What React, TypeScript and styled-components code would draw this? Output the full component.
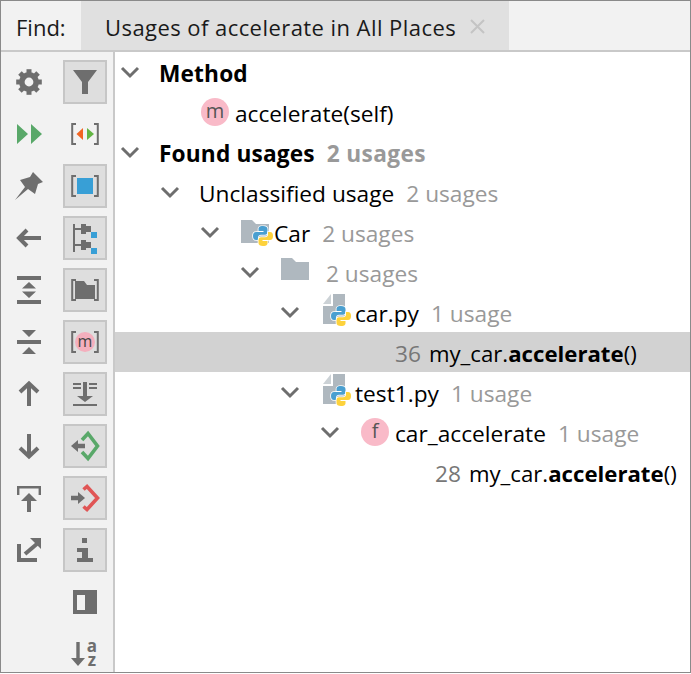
import styled, { createGlobalStyle } from "styled-components";
import type { ReactNode } from "react";

const GRAY = "#6e6e6e";

const GlobalStyle = createGlobalStyle`
  html, body {
    margin: 0;
    padding: 0;
    background: #fff;
  }
  body {
    font-family: "Open Sans", "Noto Sans", "Liberation Sans", sans-serif;
  }
`;

function Glyph({ children }: { children: ReactNode }) {
  return (
    <svg width="28" height="28" viewBox="0 0 28 28" style={{ overflow: "visible" }}>
      {children}
    </svg>
  );
}

const brackets = (
  <path d="M5 4H1.2V24H5M23 4H26.8V24H23" fill="none" stroke={GRAY} strokeWidth="2" />
);

const gearTeeth = [0, 45, 90, 135, 180, 225, 270, 315];

const leftIcons: ReactNode[] = [
  <>
    <circle cx="14" cy="14" r="7.2" fill="none" stroke={GRAY} strokeWidth="5.6" />
    {gearTeeth.map(a => (
      <rect key={a} x="11.5" y="1.2" width="5" height="5" fill={GRAY} transform={`rotate(${a} 14 14)`} />
    ))}
  </>,
  <path d="M2 4L13 14L2 24ZM16 4L27 14L16 24Z" fill="#59a869" />,
  <path d="M18 0L28 10L23 12L20 22L13 17L0 28L10 15L5 8L15 5Z" fill={GRAY} />,
  <>
    <path d="M3 14H26" stroke={GRAY} strokeWidth="4" />
    <path d="M12 6L4 14L12 22" fill="none" stroke={GRAY} strokeWidth="4" />
  </>,
  <path d="M2 0H26V4H2ZM2 24H26V28H2ZM14 6L21 12.5H7ZM14 22L21 15.5H7Z" fill={GRAY} />,
  <path d="M2 12H26V16H2ZM7 2H21L14 9ZM14 19L21 26H7Z" fill={GRAY} />,
  <>
    <path d="M14 4V26" stroke={GRAY} strokeWidth="4" />
    <path d="M5 12L14 3.5L23 12" fill="none" stroke={GRAY} strokeWidth="4" />
  </>,
  <>
    <path d="M14 2V24" stroke={GRAY} strokeWidth="4" />
    <path d="M5 16L14 24.5L23 16" fill="none" stroke={GRAY} strokeWidth="4" />
  </>,
  <>
    <path d="M3.2 11V3.2H24.8V11" fill="none" stroke={GRAY} strokeWidth="2.4" />
    <path d="M14 9L22 17H16V28H12V17H6Z" fill={GRAY} />
  </>,
  <>
    <path d="M4 8V24H22" fill="none" stroke={GRAY} strokeWidth="4" />
    <path d="M10 18L23 7" stroke={GRAY} strokeWidth="4" />
    <path d="M15 2H26V13Z" fill={GRAY} />
  </>,
];

const rightIcons: { on: boolean; icon: ReactNode }[] = [
  { on: true, icon: <path d="M2 2H26L17 14V26H11V14Z" fill={GRAY} /> },
  {
    on: false,
    icon: (
      <>
        {brackets}
        <path d="M12 8V20L5.5 14Z" fill="#f26522" />
        <path d="M16 8V20L23 14Z" fill="#62b543" />
      </>
    ),
  },
  {
    on: true,
    icon: (
      <>
        {brackets}
        <rect x="6" y="6" width="16" height="16" fill="#389fd6" />
      </>
    ),
  },
  {
    on: true,
    icon: (
      <>
        <path d="M3 0V28" stroke={GRAY} strokeWidth="2" />
        <path d="M3 5H11M3 21H11" stroke={GRAY} strokeWidth="2" />
        <path d="M10 0H15V2H20V8H15V10H10ZM10 16H15V18H20V24H15V26H10Z" fill={GRAY} />
        <rect x="20" y="8" width="6" height="6" fill="#389fd6" />
        <rect x="20" y="24" width="6" height="6" fill="#389fd6" />
      </>
    ),
  },
  {
    on: true,
    icon: (
      <>
        {brackets}
        <path d="M4 5H13L16 9H24V23H4Z" fill={GRAY} />
      </>
    ),
  },
  {
    on: true,
    icon: (
      <>
        {brackets}
        <circle cx="14" cy="14" r="10" fill="#f4afbd" />
        <text x="14" y="18.5" textAnchor="middle" fontSize="16" fontFamily="Open Sans, sans-serif" fill="#444">
          m
        </text>
      </>
    ),
  },
  {
    on: true,
    icon: (
      <path
        d="M2 3H10V5H2ZM18 3H26V5H18ZM2 7H10V9H2ZM18 7H26V9H18ZM12 2H16V16H22L14 22L6 16H12ZM2 24H26V26H2Z"
        fill={GRAY}
      />
    ),
  },
  {
    on: true,
    icon: (
      <>
        <path d="M11 8L17 1.5L26.5 14L17 26.5L11 20" fill="none" stroke="#59a869" strokeWidth="3.6" />
        <path d="M14 14H4" stroke={GRAY} strokeWidth="4.5" />
        <path d="M7 8V20L0 14Z" fill={GRAY} />
      </>
    ),
  },
  {
    on: true,
    icon: (
      <>
        <path d="M12.5 5.5L16 2.5L26.5 14L16 25.5L12.5 22.5" fill="none" stroke="#e05555" strokeWidth="3.6" />
        <path d="M0 14H9" stroke={GRAY} strokeWidth="4.5" />
        <path d="M7 8L14 14L7 20Z" fill={GRAY} />
      </>
    ),
  },
  {
    on: true,
    icon: <path d="M11 2H16V7H11ZM6 12H17V22H22V26H6V22H11V16H6Z" fill={GRAY} />,
  },
  {
    on: false,
    icon: <path fillRule="evenodd" d="M2 2H26V26H2ZM6 7V22H14V7Z" fill={GRAY} />,
  },
  {
    on: false,
    icon: (
      <>
        <path d="M7 2V20" stroke={GRAY} strokeWidth="3.4" />
        <path d="M0 18H14L7 26Z" fill={GRAY} />
        <text x="21" y="12" textAnchor="middle" fontSize="17" fontWeight="700" fontFamily="Open Sans, sans-serif" fill={GRAY}>
          a
        </text>
        <text x="21" y="26" textAnchor="middle" fontSize="17" fontWeight="700" fontFamily="Open Sans, sans-serif" fill={GRAY}>
          z
        </text>
      </>
    ),
  },
];

function Python({ x, y }: { x: number; y: number }) {
  const blue = "M10 0C6 0 5.5 1.5 5.5 3V5H10.5V6H3C1 6 0 7.5 0 10C0 12.5 1 14 3 14H5V11.5C5 9.8 6.3 8.7 8 8.7H12C13.5 8.7 14.5 7.5 14.5 6V3C14.5 1.2 12.8 0 10 0Z";
  return (
    <g transform={`translate(${x} ${y})`}>
      <path d={blue} fill="#4a9fd0" stroke="#fff" strokeWidth="1.6" paintOrder="stroke" />
      <path d={blue} fill="#fdd23c" stroke="#fff" strokeWidth="1.6" paintOrder="stroke" transform="rotate(180 10 10)" />
    </g>
  );
}

const FOLDER = "#afb8bf";

const PyFolderIcon = () => (
  <SlotSvg width="34" height="40" viewBox="0 0 34 40">
    <path d="M1 8H12L16 12H29V31H1Z" fill={FOLDER} />
    <Python x={13} y={14} />
  </SlotSvg>
);

const FolderIcon = () => (
  <SlotSvg width="46" height="40" viewBox="0 0 46 40">
    <path d="M1 6H12L16 10H29V28H1Z" fill={FOLDER} />
  </SlotSvg>
);

const PyFileIcon = () => (
  <SlotSvg width="35" height="40" viewBox="0 0 35 40">
    <path d="M3 12L11 2V12Z" fill="#ccd2d6" />
    <path d="M13 2H25V32H3V14H13Z" fill={FOLDER} />
    <Python x={11} y={14} />
  </SlotSvg>
);

export default function App() {
  return (
    <Frame>
      <GlobalStyle />
      <Header>
        <FindLabel>Find:</FindLabel>
        <Tab>
          Usages of accelerate in All Places
          <svg width="15" height="15" viewBox="0 0 15 15">
            <path d="M1 1L14 14M14 1L1 14" stroke="#c4c4c4" strokeWidth="2" />
          </svg>
        </Tab>
      </Header>
      <Body>
        <Toolbar>
          <ToolColumn>
            {leftIcons.map((icon, i) => (
              <ToolButton key={i}>
                <Glyph>{icon}</Glyph>
              </ToolButton>
            ))}
          </ToolColumn>
          <ToolColumn>
            {rightIcons.map((b, i) => (
              <ToolButton key={i} $on={b.on}>
                <Glyph>{b.icon}</Glyph>
              </ToolButton>
            ))}
          </ToolColumn>
        </Toolbar>
        <Tree>
          <Row $depth={0}>
            <Chevron />
            <Strong>Method</Strong>
          </Row>
          <Row $depth={1}>
            <Twisty />
            <Badge>m</Badge>
            <Label>accelerate(self)</Label>
          </Row>
          <Row $depth={0}>
            <Chevron />
            <Strong>Found usages</Strong>
            <StrongMuted>2 usages</StrongMuted>
          </Row>
          <Row $depth={1}>
            <Chevron />
            <Label>Unclassified usage</Label>
            <Muted>2 usages</Muted>
          </Row>
          <Row $depth={2}>
            <Chevron />
            <PyFolderIcon />
            <Label>Car</Label>
            <Muted>2 usages</Muted>
          </Row>
          <Row $depth={3}>
            <Chevron />
            <FolderIcon />
            <CountOnly>2 usages</CountOnly>
          </Row>
          <Row $depth={4}>
            <Chevron />
            <PyFileIcon />
            <Label>car.py</Label>
            <Muted>1 usage</Muted>
          </Row>
          <Row $depth={5} $selected>
            <Twisty />
            <LineSlot />
            <LineNumber>36</LineNumber>
            <Code>
              my_car.<b>accelerate</b>()
            </Code>
          </Row>
          <Row $depth={4}>
            <Chevron />
            <PyFileIcon />
            <Label>test1.py</Label>
            <Muted>1 usage</Muted>
          </Row>
          <Row $depth={5}>
            <Chevron />
            <Badge>f</Badge>
            <Label>car_accelerate</Label>
            <Muted>1 usage</Muted>
          </Row>
          <Row $depth={6}>
            <Twisty />
            <LineSlot />
            <LineNumber>28</LineNumber>
            <Code>
              my_car.<b>accelerate</b>()
            </Code>
          </Row>
        </Tree>
      </Body>
    </Frame>
  );
}

function Chevron() {
  return (
    <Twisty>
      <svg width="20" height="14" viewBox="0 0 20 14">
        <path d="M2 3L10 11L18 3" fill="none" stroke={GRAY} strokeWidth="3" />
      </svg>
    </Twisty>
  );
}

const Frame = styled.div`
  box-sizing: border-box;
  width: 691px;
  height: 673px;
  border: 1px solid #8a8a8a;
  display: flex;
  flex-direction: column;
  overflow: hidden;
  background: #fff;
  color: #000;
  font-size: 22.7px;
`;

const Header = styled.div`
  display: flex;
  box-sizing: border-box;
  height: 51px;
  flex-shrink: 0;
  background: #f2f2f2;
  border-bottom: 2px solid #c9c9c9;
  font-size: 22px;
`;

const FindLabel = styled.div`
  width: 80px;
  padding: 2px 0 0 15px;
  box-sizing: border-box;
  display: flex;
  align-items: center;
  color: #1a1a1a;
`;

const Tab = styled.div`
  width: 428px;
  padding: 2px 0 0 24px;
  box-sizing: border-box;
  display: flex;
  align-items: center;
  gap: 14px;
  background: #e0e0e0;
  color: #1a1a1a;
  letter-spacing: 0.44px;
`;

const Body = styled.div`
  flex: 1;
  display: flex;
  min-height: 0;
`;

const Toolbar = styled.div`
  width: 114px;
  flex-shrink: 0;
  box-sizing: border-box;
  padding: 8px 6px 0 6px;
  display: flex;
  gap: 12px;
  background: #f2f2f2;
  border-right: 2px solid #c9c9c9;
`;

const ToolColumn = styled.div`
  display: flex;
  flex-direction: column;
  gap: 8px;
`;

const ToolButton = styled.div<{ $on?: boolean }>`
  box-sizing: border-box;
  width: 44px;
  height: 44px;
  flex-shrink: 0;
  display: flex;
  align-items: center;
  justify-content: center;
  background: ${p => (p.$on ? "#dedede" : "transparent")};
  border: 2px solid ${p => (p.$on ? "#c6c6c6" : "transparent")};
`;

const Tree = styled.div`
  flex: 1;
  min-width: 0;
`;

const Row = styled.div<{ $depth: number; $selected?: boolean }>`
  height: 40px;
  display: flex;
  align-items: center;
  white-space: nowrap;
  padding-left: ${p => p.$depth * 40}px;
  background: ${p => (p.$selected ? "#d2d2d2" : "transparent")};
`;

const Twisty = styled.span`
  width: 44px;
  flex-shrink: 0;
  padding-left: 5px;
  box-sizing: border-box;
  display: flex;
  align-items: center;
`;

const SlotSvg = styled.svg`
  flex-shrink: 0;
  margin-left: 1px;
`;

const LineSlot = styled.span`
  width: 36px;
  flex-shrink: 0;
`;

const Badge = styled.span`
  width: 28px;
  height: 28px;
  margin-left: 2px;
  margin-right: 6px;
  flex-shrink: 0;
  border-radius: 50%;
  background: #f9bac8;
  color: #555;
  font-size: 20px;
  line-height: 26px;
  text-align: center;
`;

const Label = styled.span`
  padding-top: 2px;
`;

const Strong = styled(Label)`
  font-weight: 700;
  letter-spacing: 0.15px;
`;

const Muted = styled(Label)`
  margin-left: 12px;
  color: #999;
`;

const StrongMuted = styled(Muted)`
  font-weight: 700;
  letter-spacing: 0.35px;
`;

const CountOnly = styled(Label)`
  color: #999;
`;

const LineNumber = styled(Label)`
  margin-right: 8px;
  color: #777;
`;

const Code = styled(Label)`
  font-size: 22.2px;
`;
